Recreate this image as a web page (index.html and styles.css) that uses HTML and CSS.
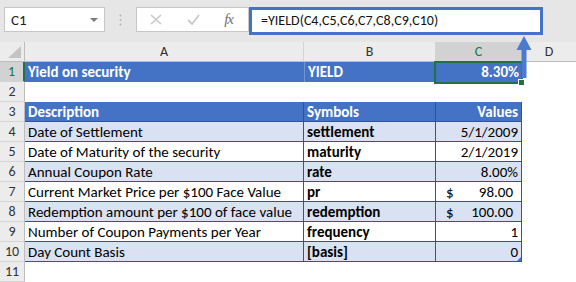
FILE: index.html
```html
<!DOCTYPE html>
<html lang="en">
<head>
    <meta charset="UTF-8">
    <title>YIELD function</title>
    <link rel="stylesheet" href="styles.css">
</head>
<body>
    <div class="app">
        <div class="formula-bar">
            <div class="name-box">
                <span>C1</span>
                <svg class="caret" width="8" height="5" viewBox="0 0 8 5"><path d="M0 0h8L4 4z" fill="#7a7a7a"/></svg>
            </div>
            <div class="grip">
                <svg width="3" height="12" viewBox="0 0 3 12"><circle cx="1.5" cy="1.5" r="1" fill="#b4b4b4"/><circle cx="1.5" cy="6" r="1" fill="#b4b4b4"/><circle cx="1.5" cy="10.5" r="1" fill="#b4b4b4"/></svg>
            </div>
            <div class="fx-buttons">
                <svg width="12" height="11" viewBox="0 0 12 11"><path d="M1 1l10 9M11 1L1 10" stroke="#c8c8c8" stroke-width="1.6"/></svg>
                <svg width="13" height="11" viewBox="0 0 13 11"><path d="M1 6l4 4 7-9" stroke="#c8c8c8" stroke-width="1.8" fill="none"/></svg>
                <span class="fx">fx</span>
            </div>
            <div class="formula-input">=YIELD(C4,C5,C6,C7,C8,C9,C10)</div>
        </div>

        <div class="sheet">
            <div class="corner"><svg width="13" height="12" viewBox="0 0 13 12"><path d="M13 0v12H0z" fill="#c4c4c4"/></svg></div>
            <div class="col-head">A</div>
            <div class="col-head">B</div>
            <div class="col-head active">C</div>
            <div class="col-head last">D</div>

            <div class="row-head active">1</div>
            <div class="cell title">Yield on security</div>
            <div class="cell title mid">YIELD</div>
            <div class="cell title num">8.30%</div>
            <div class="cell blank"></div>

            <div class="row-head">2</div>
            <div class="cell"></div>
            <div class="cell"></div>
            <div class="cell"></div>
            <div class="cell blank"></div>

            <div class="row-head">3</div>
            <div class="cell tb head">Description</div>
            <div class="cell tb head bold">Symbols</div>
            <div class="cell tb head num">Values</div>
            <div class="cell blank"></div>

            <div class="row-head">4</div>
            <div class="cell tb band">Date of Settlement</div>
            <div class="cell tb band bold">settlement</div>
            <div class="cell tb band num">5/1/2009</div>
            <div class="cell blank"></div>

            <div class="row-head">5</div>
            <div class="cell tb">Date of Maturity of the security</div>
            <div class="cell tb bold">maturity</div>
            <div class="cell tb num">2/1/2019</div>
            <div class="cell blank"></div>

            <div class="row-head">6</div>
            <div class="cell tb band">Annual Coupon Rate</div>
            <div class="cell tb band bold">rate</div>
            <div class="cell tb band num">8.00%</div>
            <div class="cell blank"></div>

            <div class="row-head">7</div>
            <div class="cell tb">Current Market Price per $100 Face Value</div>
            <div class="cell tb bold">pr</div>
            <div class="cell tb money"><span>$</span><span>98.00</span></div>
            <div class="cell blank"></div>

            <div class="row-head">8</div>
            <div class="cell tb band">Redemption amount per $100 of face value</div>
            <div class="cell tb band bold">redemption</div>
            <div class="cell tb band money"><span>$</span><span>100.00</span></div>
            <div class="cell blank"></div>

            <div class="row-head">9</div>
            <div class="cell tb">Number of Coupon Payments per Year</div>
            <div class="cell tb bold">frequency</div>
            <div class="cell tb num">1</div>
            <div class="cell blank"></div>

            <div class="row-head">10</div>
            <div class="cell tb band">Day Count Basis</div>
            <div class="cell tb band bold">[basis]</div>
            <div class="cell tb band num corner-mark">0</div>
            <div class="cell blank"></div>

            <div class="row-head">11</div>
            <div class="cell"></div>
            <div class="cell"></div>
            <div class="cell"></div>
            <div class="cell blank"></div>

            <div class="selection"><div class="handle"></div></div>
        </div>

        <svg class="arrow" width="16" height="42" viewBox="0 0 16 42"><path d="M8 0L15.5 14H10.5V42H5.5V14H0.5z" fill="#4a7bcf"/></svg>
    </div>
</body>
</html>
```

FILE: styles.css
```css
body {
    margin: 0;
    padding: 0;
    background: #fff;
    font-family: Carlito, Calibri, Lato, sans-serif;
    color: #000;
}

.app {
    position: relative;
    width: 576px;
    height: 282px;
    overflow: hidden;
}

/* formula bar */
.formula-bar {
    height: 42px;
    box-sizing: border-box;
    background: #e6e6e6;
    display: flex;
    align-items: flex-start;
    padding: 7px 0 0 4px;
}

.name-box {
    width: 101px;
    height: 25px;
    box-sizing: border-box;
    background: #fff;
    border: 1px solid #c6c6c6;
    display: flex;
    align-items: center;
    justify-content: space-between;
    padding: 0 6px 0 6px;
    font-size: 15px;
    color: #222;
}

.name-box .caret {
    margin-top: 1px;
}

.grip {
    width: 31px;
    height: 25px;
    display: flex;
    align-items: center;
    justify-content: center;
}

.fx-buttons {
    width: 113px;
    height: 25px;
    box-sizing: border-box;
    background: #fff;
    border: 1px solid #c6c6c6;
    display: flex;
    align-items: center;
    justify-content: space-between;
    padding: 0 15px 0 13px;
}

.fx {
    font-family: "Liberation Serif", serif;
    font-style: italic;
    font-size: 15px;
    color: #707070;
    letter-spacing: -1px;
}

.formula-input {
    width: 294px;
    height: 28px;
    box-sizing: border-box;
    background: #fff;
    border: 3px solid #4472c4;
    font-size: 14px;
    line-height: 22px;
    padding-left: 9px;
    color: #111;
}

/* worksheet grid */
.sheet {
    position: relative;
    display: grid;
    grid-template-columns: 25px 279px 132px 86px 1fr;
    grid-auto-rows: 20px;
    font-size: 15px;
}

.corner,
.col-head {
    background: #ececec;
    border-bottom: 1px solid #bdbdbd;
    box-sizing: border-box;
}

.corner {
    border-right: 1px solid #bdbdbd;
    display: flex;
    align-items: flex-end;
    justify-content: flex-end;
    padding: 0 3px 3px 0;
}

.col-head {
    border-right: 1px solid #d4d4d4;
    text-align: center;
    line-height: 20px;
    font-size: 14px;
    color: #333;
}

.col-head.last {
    border-right: none;
}

.col-head.active {
    background: #d2d2d2;
    color: #217346;
}

.row-head {
    background: #ececec;
    border-right: 1px solid #bdbdbd;
    border-bottom: 1px solid #d4d4d4;
    box-sizing: border-box;
    text-align: center;
    line-height: 20px;
    font-size: 14px;
    color: #333;
}

.row-head.active {
    background: #d2d2d2;
    color: #217346;
    border-right: 2px solid #217346;
}

.cell {
    box-sizing: border-box;
    line-height: 21px;
    padding: 0 3px;
    white-space: nowrap;
    overflow: hidden;
}

.cell.title {
    background: #4472c4;
    color: #fff;
    font-weight: bold;
}

.cell.title.mid {
    border-left: 1px solid #7595d2;
}

.cell.tb {
    border-right: 1px solid #2f5597;
    border-bottom: 1px solid #2f5597;
}

.cell.head {
    background: #4472c4;
    color: #fff;
    font-weight: bold;
}

.cell.band {
    background: #d9e1f2;
}

.cell.bold {
    font-weight: bold;
}

.cell.num {
    text-align: right;
}

.cell.money {
    display: flex;
    justify-content: space-between;
    padding: 0 8px 0 10px;
}

.corner-mark {
    position: relative;
}

.corner-mark::after {
    content: "";
    position: absolute;
    right: 0;
    bottom: 0;
    border-left: 4px solid transparent;
    border-bottom: 4px solid #4472c4;
}

/* active cell outline */
.selection {
    position: absolute;
    left: 434px;
    top: 19px;
    width: 89px;
    height: 23px;
    box-sizing: border-box;
    border: 2px solid #217346;
}

.handle {
    position: absolute;
    right: -4px;
    bottom: -4px;
    width: 5px;
    height: 5px;
    background: #217346;
    border: 1px solid #fff;
}

.arrow {
    position: absolute;
    left: 516px;
    top: 36px;
}
```
